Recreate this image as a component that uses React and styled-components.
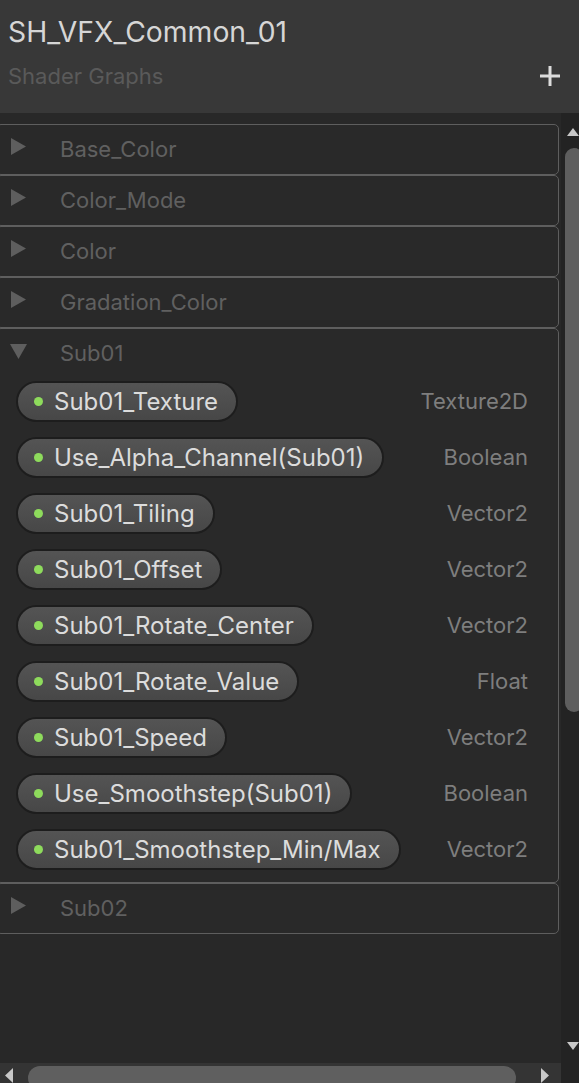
import React from 'react';
import styled, { createGlobalStyle } from 'styled-components';

const GlobalStyle = createGlobalStyle`
  html, body {
    margin: 0;
    padding: 0;
    background: #282828;
    overflow: hidden;
  }
  * {
    box-sizing: border-box;
  }
`;

const Window = styled.div`
  width: 579px;
  height: 1083px;
  display: grid;
  grid-template-rows: 113px 1fr;
  font-family: Inter, "Noto Sans", sans-serif;
  background: #282828;
  overflow: hidden;
`;

const Header = styled.header`
  background: #383838;
  padding: 14px 19px 0 8px;
  display: flex;
  flex-direction: column;
`;

const Title = styled.h1`
  margin: 0;
  font-size: 28.3px;
  line-height: 36px;
  font-weight: 400;
  color: #d6d6d6;
`;

const SubRow = styled.div`
  margin-top: 12px;
  display: flex;
  align-items: center;
  justify-content: space-between;
`;

const Subtitle = styled.span`
  font-size: 22px;
  line-height: 28px;
  color: #5a5a5a;
`;

const PlusButton = styled.button`
  border: none;
  background: none;
  padding: 0;
  width: 20px;
  height: 20px;
  display: flex;
`;

const Body = styled.div`
  display: grid;
  grid-template-columns: 1fr 18px;
  grid-template-rows: 1fr 20px;
  min-height: 0;
`;

const Content = styled.div`
  padding: 11px 2px 0 0;
  overflow: hidden;
  min-width: 0;
`;

const CardList = styled.div`
  margin-left: -4px;
  display: flex;
  flex-direction: column;
`;

const Card = styled.section`
  border: 1px solid #5e5e5e;
  border-radius: 5px;
  background: #292929;
`;

const CardHeader = styled.div`
  height: 49px;
  display: flex;
  align-items: center;
  padding-left: 13px;
`;

const CaretBox = styled.span`
  width: 17px;
  height: 17px;
  display: flex;
  align-items: center;
  justify-content: center;
  margin: 0 33px ${({ open }) => (open ? '4px' : '6px')} 0;
`;

const Label = styled.span`
  font-size: 22px;
  color: #606060;
  margin-bottom: 2px;
`;

const Rows = styled.div`
  display: flex;
  flex-direction: column;
  gap: 15px;
  padding: 3px 30px 12px 19px;
`;

const Row = styled.div`
  display: flex;
  align-items: center;
  justify-content: space-between;
`;

const Pill = styled.div`
  height: 41px;
  display: flex;
  align-items: center;
  gap: 11px;
  padding: 0 18px 0 16px;
  border: 2px solid #1d1d1d;
  border-radius: 21px;
  background: linear-gradient(#545454, #474747);
  font-size: 24px;
  color: #dcdcdc;
  white-space: nowrap;
`;

const Dot = styled.span`
  width: 9px;
  height: 9px;
  border-radius: 50%;
  background: #8edb5c;
  flex-shrink: 0;
`;

const TypeName = styled.span`
  font-size: 22px;
  color: #7e7e7e;
  margin-bottom: 1px;
`;

const VScroll = styled.div`
  grid-row: 1 / span 2;
  grid-column: 2;
  background: #232323;
  display: flex;
  flex-direction: column;
  align-items: flex-start;
  padding: 15px 0 33px 6px;
  overflow: hidden;
`;

const VThumb = styled.div`
  margin: 12px 0 0 -2px;
  width: 18px;
  height: 564px;
  border-radius: 9px;
  background: #5e5e5e;
`;

const DownArrow = styled.div`
  margin-top: auto;
  display: flex;
`;

const HScroll = styled.div`
  grid-row: 2;
  grid-column: 1;
  background: #343434;
  display: flex;
  align-items: flex-start;
  padding: 3px 0 0 5px;
  overflow: hidden;
`;

const HThumb = styled.div`
  margin: 0 25px 0 15px;
  width: 488px;
  height: 24px;
  border-radius: 12px;
  background: #5f5f5f;
`;

const HArrow = styled.div`
  display: flex;
  padding-top: 2px;
`;

const Caret = ({ open }) =>
  open ? (
    <svg width="17" height="15" viewBox="0 0 17 15">
      <polygon points="0,0 17,0 8.5,15" fill="#5e5e5e" />
    </svg>
  ) : (
    <svg width="15" height="17" viewBox="0 0 15 17">
      <polygon points="0,0 15,8.5 0,17" fill="#5e5e5e" />
    </svg>
  );

const Tri = ({ dir, w, h, color = '#c8c8c8' }) => {
  const pts = {
    up: `0,${h} ${w},${h} ${w / 2},0`,
    down: `0,0 ${w},0 ${w / 2},${h}`,
    left: `${w},0 ${w},${h} 0,${h / 2}`,
    right: `0,0 ${w},${h / 2} 0,${h}`,
  }[dir];
  return (
    <svg width={w} height={h} viewBox={`0 0 ${w} ${h}`}>
      <polygon points={pts} fill={color} />
    </svg>
  );
};

const sections = ['Base_Color', 'Color_Mode', 'Color', 'Gradation_Color'];

const props = [
  ['Sub01_Texture', 'Texture2D'],
  ['Use_Alpha_Channel(Sub01)', 'Boolean'],
  ['Sub01_Tiling', 'Vector2'],
  ['Sub01_Offset', 'Vector2'],
  ['Sub01_Rotate_Center', 'Vector2'],
  ['Sub01_Rotate_Value', 'Float'],
  ['Sub01_Speed', 'Vector2'],
  ['Use_Smoothstep(Sub01)', 'Boolean'],
  ['Sub01_Smoothstep_Min/Max', 'Vector2'],
];

const Section = ({ name, open, children }) => (
  <Card>
    <CardHeader>
      <CaretBox open={open}>
        <Caret open={open} />
      </CaretBox>
      <Label>{name}</Label>
    </CardHeader>
    {open && children}
  </Card>
);

const App = () => (
  <>
    <GlobalStyle />
    <Window>
      <Header>
        <Title>SH_VFX_Common_01</Title>
        <SubRow>
          <Subtitle>Shader Graphs</Subtitle>
          <PlusButton aria-label="Add">
            <svg width="20" height="20" viewBox="0 0 20 20">
              <rect x="8.5" y="0" width="3" height="20" fill="#dcdcdc" />
              <rect x="0" y="8.5" width="20" height="3" fill="#dcdcdc" />
            </svg>
          </PlusButton>
        </SubRow>
      </Header>

      <Body>
        <Content>
          <CardList>
            {sections.map((s) => (
              <Section key={s} name={s} />
            ))}
            <Section name="Sub01" open>
              <Rows>
                {props.map(([n, t]) => (
                  <Row key={n}>
                    <Pill>
                      <Dot />
                      {n}
                    </Pill>
                    <TypeName>{t}</TypeName>
                  </Row>
                ))}
              </Rows>
            </Section>
            <Section name="Sub02" />
          </CardList>
        </Content>

        <VScroll>
          <Tri dir="up" w={12} h={8} />
          <VThumb />
          <DownArrow>
            <Tri dir="down" w={12} h={8} />
          </DownArrow>
        </VScroll>

        <HScroll>
          <HArrow>
            <Tri dir="left" w={8} h={15} />
          </HArrow>
          <HThumb />
          <HArrow>
            <Tri dir="right" w={8} h={15} />
          </HArrow>
        </HScroll>
      </Body>
    </Window>
  </>
);

export default App;
